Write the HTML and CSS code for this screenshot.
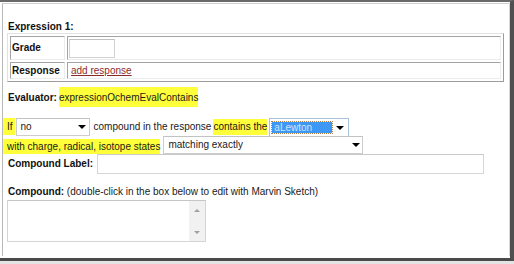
FILE: index.html
```html
<!DOCTYPE html>
<html>
<head>
<meta charset="utf-8">
<link rel="stylesheet" href="styles.css">
</head>
<body>
<div class="frame">
  <div class="panel">
    <div class="heading">Expression 1:</div>
    <table class="expr">
      <tr class="r-grade"><th>Grade</th><td><div class="grade-input"></div></td></tr>
      <tr class="r-resp"><th>Response</th><td><a class="link" href="#">add response</a></td></tr>
    </table>
    <div class="evaluator"><b>Evaluator:</b><span class="hl hl-eval">expressionOchemEvalContains</span></div>
    <div class="row row1">
      <span class="hl hl-if">If</span>
      <div class="select sel-no"><span class="opt">no</span><span class="arrow"></span></div>
      <span class="plain">compound in the response</span>
      <span class="hl hl-contains">contains the</span>
      <div class="select sel-what"><span class="focus-opt">aLewton</span><span class="arrow"></span></div>
    </div>
    <div class="row row2">
      <span class="hl hl-with">with charge, radical, isotope states</span>
      <div class="select sel-match"><span class="opt">matching exactly</span><span class="arrow"></span></div>
    </div>
    <div class="row row3">
      <b class="label">Compound Label:</b>
      <div class="text-input"></div>
    </div>
    <div class="compound-line"><b>Compound:</b> (double-click in the box below to edit with Marvin Sketch)</div>
    <div class="sketch">
      <div class="scrollbar"><span class="up"></span><span class="down"></span></div>
    </div>
  </div>
</div>
</body>
</html>
```

FILE: styles.css
```css
html, body {
  margin: 0;
  padding: 0;
}
body {
  width: 514px;
  height: 264px;
  background: #e4e4e4;
  font-family: "Liberation Sans", Arial, sans-serif;
  font-size: 10px;
  line-height: 12px;
  color: #1a1a1a;
  overflow: hidden;
}
.frame {
  box-sizing: border-box;
  width: 514px;
  height: 261px;
  background: #ffffff;
  border-top: 2px solid #6a6a6a;
  border-right: 4px solid #505050;
  border-bottom: 3px solid #4a4a4a;
  padding-top: 1px;
}
.panel {
  box-sizing: border-box;
  margin-left: 2px;
  width: 508px;
  height: 253px;
  border-top: 1px solid #cfcfcf;
  border-left: 1px solid #b8b8b8;
  border-right: 1px solid #d4d4d4;
}
.heading {
  margin: 17px 0 0 5px;
  font-weight: bold;
  color: #111;
}
.expr {
  margin-left: 4px;
  width: 497px;
  border-collapse: separate;
  border-spacing: 2px;
  border: 1px solid;
  border-color: #e2e2e2 #9c9c9c #9c9c9c #e2e2e2;
}
.expr th, .expr td {
  border: 1px solid;
  border-color: #a4a4a4 #ececec #ececec #a4a4a4;
  padding: 1px;
  text-align: left;
  vertical-align: middle;
}
.expr th {
  width: 51px;
  font-weight: bold;
  color: #111;
}
.r-grade th, .r-grade td { height: 20px; }
.r-resp th, .r-resp td { height: 13px; }
.grade-input {
  box-sizing: border-box;
  width: 46px;
  height: 19px;
  border: 1px solid #d2d2d2;
  border-top-color: #c0c0c0;
  background: #fff;
}
.link {
  color: #8c2a2a;
  text-decoration: underline;
  margin-left: 2px;
}
.evaluator {
  margin: 5px 0 0 5px;
  display: flex;
  align-items: flex-start;
  height: 20px;
}
.evaluator b {
  padding-top: 5px;
  color: #111;
}
.hl {
  background: #ffff3a;
  white-space: nowrap;
}
.hl-eval {
  margin-left: 2px;
  display: block;
  padding: 5px 0 3px 0;
  height: 12px;
}
.row {
  display: flex;
  white-space: nowrap;
}
.row1 {
  margin-top: 11px;
  height: 18px;
  align-items: flex-start;
}
.hl-if {
  display: block;
  height: 17px;
  line-height: 17px;
  padding: 0 2px 0 4px;
}
.select {
  box-sizing: border-box;
  position: relative;
  display: flex;
  align-items: center;
  background: #fff;
  border: 1px solid #cdcdcd;
  border-top-color: #c2c2c2;
}
.select .opt {
  padding-left: 4px;
  line-height: 14px;
  color: #1a1a1a;
}
.select .arrow {
  position: absolute;
  right: 3px;
  top: 6px;
  width: 0;
  height: 0;
  border-left: 4px solid transparent;
  border-right: 4px solid transparent;
  border-top: 4px solid #000;
}
.sel-no {
  margin-left: 1px;
  width: 74px;
  height: 18px;
}
.plain {
  margin-left: 4px;
  line-height: 18px;
}
.hl-contains {
  display: block;
  margin: 1px 0 0 2px;
  height: 16px;
  line-height: 16px;
}
.sel-what {
  margin-left: 2px;
  width: 80px;
  height: 19px;
  border-color: #a9c2dc;
}
.sel-what .arrow { right: 4px; top: 7px; }
.focus-opt {
  display: block;
  margin-left: 2px;
  width: 58px;
  height: 11px;
  line-height: 11px;
  padding-left: 2px;
  background: #3d98f5;
  color: #cfe4ff;
  outline: 1px dotted #b5804a;
  font-size: 10px;
}
.row2 {
  height: 18px;
  align-items: flex-end;
}
.hl-with {
  display: block;
  height: 15px;
  line-height: 15px;
  padding: 0 0 0 4px;
}
.sel-match {
  margin-left: 3px;
  width: 200px;
  height: 18px;
}
.sel-match .arrow { right: 2px; }
.row3 {
  height: 20px;
  align-items: center;
}
.label {
  margin-left: 5px;
  color: #111;
}
.text-input {
  box-sizing: border-box;
  margin-left: 4px;
  width: 387px;
  height: 20px;
  border: 1px solid #d6d6d6;
  border-top-color: #c8c8c8;
  background: #fff;
}
.compound-line {
  margin: 12px 0 0 5px;
  white-space: nowrap;
}
.compound-line b { color: #111; }
.sketch {
  box-sizing: border-box;
  margin: 2px 0 0 4px;
  width: 199px;
  height: 42px;
  border: 1px solid #d4d4d4;
  border-top-color: #c6c6c6;
  background: #fff;
  display: flex;
  justify-content: flex-end;
}
.scrollbar {
  position: relative;
  width: 16px;
  height: 100%;
  background: #f1f1f1;
}
.scrollbar .up, .scrollbar .down {
  position: absolute;
  left: 5px;
  width: 0;
  height: 0;
  border-left: 3px solid transparent;
  border-right: 3px solid transparent;
}
.scrollbar .up {
  top: 8px;
  border-bottom: 3px solid #a0a0a0;
}
.scrollbar .down {
  bottom: 7px;
  border-top: 3px solid #a0a0a0;
}
```
